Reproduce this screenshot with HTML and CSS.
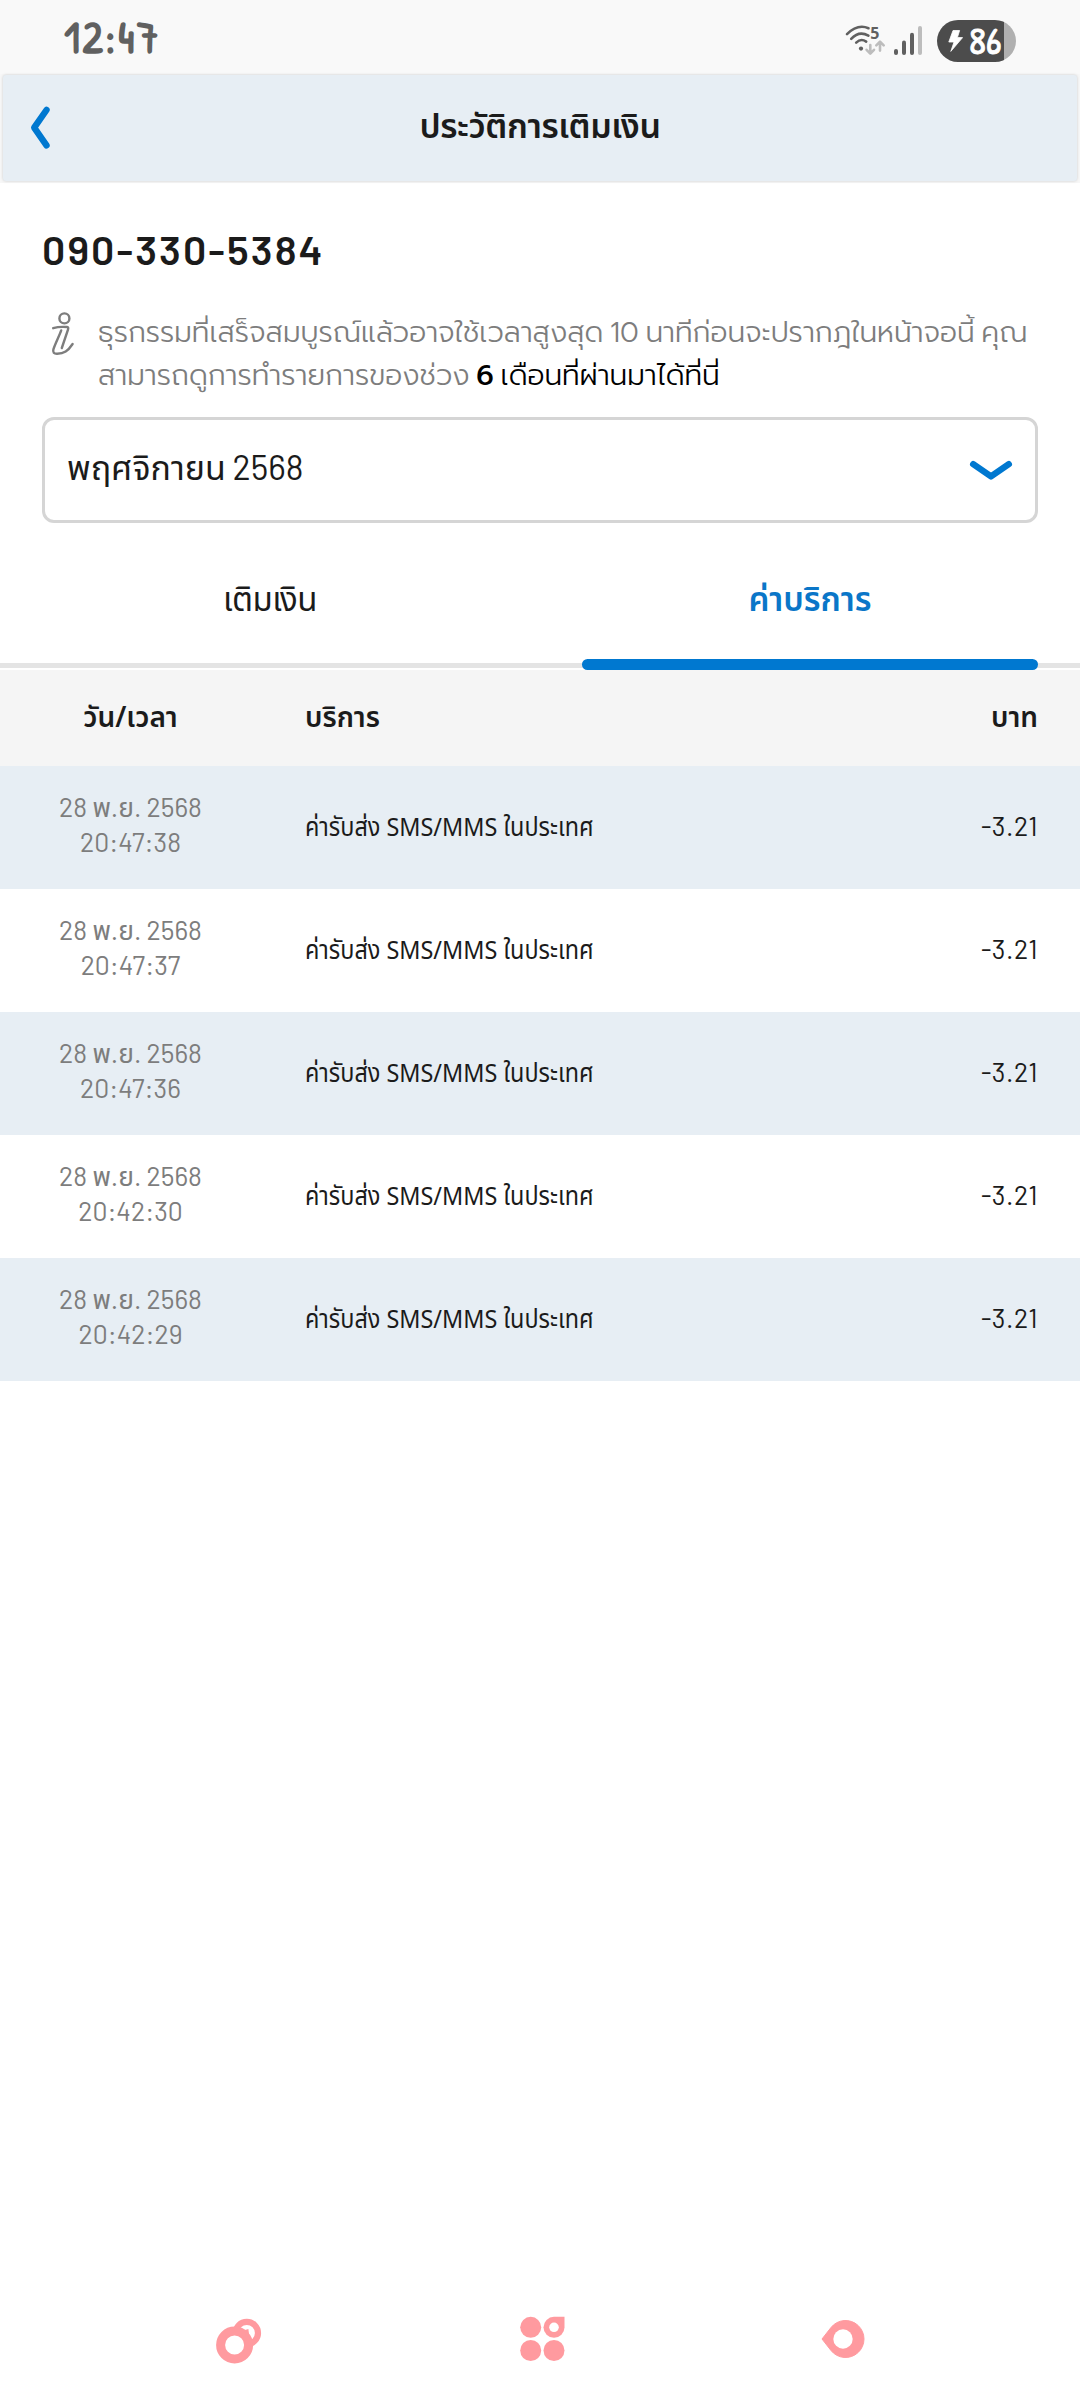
FILE: index.html
```html
<!DOCTYPE html>
<html lang="th">
<head>
<meta charset="utf-8">
<title>ประวัติการเติมเงิน</title>
<link rel="stylesheet" href="styles.css">
</head>
<body>
<div class="status">
  <span class="clock">12:47</span>
  <div class="indicators">
    <svg class="wifi" width="40" height="32" viewBox="0 0 40 32" fill="none" stroke-linecap="round">
      <g stroke="#606060" stroke-width="2.6">
        <path d="M2 9.2Q12.5 -1.4 23.5 3.2"/>
        <path d="M6.2 13.8Q14 5.4 23.4 10.6"/>
        <path d="M11.2 17.6Q16 13 21.2 16.6"/>
      </g>
      <circle cx="16" cy="23.6" r="2.1" fill="#606060"/>
      <text class="band" x="25.2" y="14.4">5</text>
      <g stroke="#bdbdbd" stroke-width="2.6" stroke-linejoin="round">
        <path d="M25.3 20v8M21.6 24.8l3.7 3.8 3.7-3.8"/>
        <path d="M35 25.6v-8M31.3 20.4l3.7-3.8 3.7 3.8"/>
      </g>
    </svg>
    <svg class="signal" width="28" height="30" viewBox="0 0 28 30">
      <rect x="0" y="23" width="4" height="6" rx="2" fill="#606060"/>
      <rect x="8" y="14.5" width="4" height="14.5" rx="2" fill="#606060"/>
      <rect x="16" y="6.8" width="4" height="22.2" rx="2" fill="#606060"/>
      <rect x="24" y="0" width="4" height="29" rx="2" fill="#bdbdbd"/>
    </svg>
    <div class="battery">
      <svg width="15" height="22" viewBox="0 0 15 22"><path d="M5 .5h6.6L9.4 7.6h5.2L2.8 21.4 6 12H.8z" fill="#fff" stroke="#fff" stroke-width=".8" stroke-linejoin="round"/></svg>
      <span class="level">86</span>
    </div>
  </div>
</div>

<header class="appbar">
  <svg class="back" width="24" height="46" viewBox="0 0 24 46"><path d="M18.500 5 6.200 22.700 18.500 40.400" fill="none" stroke="#0078d0" stroke-width="6.400" stroke-linecap="round" stroke-linejoin="round"/></svg>
  <h1 class="title">ประวัติการเติมเงิน</h1>
</header>

<main>
  <p class="phone">090-330-5384</p>
  <div class="info">
    <svg class="info-icon" width="24" height="44" viewBox="0 0 24 44" fill="none" stroke="#7d7d7d" stroke-width="2.4" stroke-linecap="round" stroke-linejoin="round">
      <circle cx="13.4" cy="6.4" r="5"/>
      <path d="M2.2 16.2C6 15 11 14.6 16 15c1.4.2 1.4 1.400 1 2.600L10.800 36M10.200 18.400C8.400 23.600 4 32 2.400 37.400c-.8 3 .6 4.300 3.400 4.300C13 41.800 17 39 21.600 32"/>
    </svg>
    <p class="info-text">ธุรกรรมที่เสร็จสมบูรณ์แล้วอาจใช้เวลาสูงสุด 10 นาทีก่อนจะปรากฎในหน้าจอนี้ คุณ<br>สามารถดูการทำรายการของช่วง <span class="dark"><b>6</b> เดือนที่ผ่านมาได้ที่นี่</span></p>
  </div>
  <div class="select">
    <span class="month">พฤศจิกายน 2568</span>
    <svg width="44" height="22" viewBox="0 0 44 22"><path d="M4.2 4.2 22 16.4 39.8 4.2" fill="none" stroke="#0078d0" stroke-width="6.4" stroke-linecap="round" stroke-linejoin="round"/></svg>
  </div>
  <nav class="tabs">
    <span class="tab">เติมเงิน</span>
    <span class="tab active">ค่าบริการ</span>
  </nav>
  <section class="table">
    <div class="row head"><span class="date">วัน/เวลา</span><span class="service">บริการ</span><span class="amount">บาท</span></div>
    <div class="row"><span class="date">28 พ.ย. 2568<br>20:47:38</span><span class="service">ค่ารับส่ง SMS/MMS ในประเทศ</span><span class="amount">-3.21</span></div>
    <div class="row"><span class="date">28 พ.ย. 2568<br>20:47:37</span><span class="service">ค่ารับส่ง SMS/MMS ในประเทศ</span><span class="amount">-3.21</span></div>
    <div class="row"><span class="date">28 พ.ย. 2568<br>20:47:36</span><span class="service">ค่ารับส่ง SMS/MMS ในประเทศ</span><span class="amount">-3.21</span></div>
    <div class="row"><span class="date">28 พ.ย. 2568<br>20:42:30</span><span class="service">ค่ารับส่ง SMS/MMS ในประเทศ</span><span class="amount">-3.21</span></div>
    <div class="row"><span class="date">28 พ.ย. 2568<br>20:42:29</span><span class="service">ค่ารับส่ง SMS/MMS ในประเทศ</span><span class="amount">-3.21</span></div>
  </section>
</main>

<footer class="navbar">
  <svg width="60" height="60" viewBox="0 0 60 60" fill="none" stroke="#ff9a9f">
    <circle cx="36.8" cy="24" r="11.2" stroke-width="6.2"/>
    <path d="M35 21l3.4-1 1.2 10-4 2z" fill="#ff9a9f" stroke="none"/>
    <circle cx="24.6" cy="36" r="14" stroke-width="9" fill="#fff"/>
  </svg>
  <svg width="60" height="60" viewBox="0 0 60 60" fill="#ff9a9f">
    <circle cx="18.7" cy="18.3" r="10.5"/>
    <path d="M42 7.800h10.500v10.500A10.500 10.500 0 1 1 42 7.800z"/>
    <circle cx="42" cy="18.3" r="4.800" fill="#fff"/>
    <circle cx="18.7" cy="41.5" r="10.500"/>
    <circle cx="42" cy="41.500" r="10.500"/>
  </svg>
  <svg width="60" height="60" viewBox="0 0 60 60">
    <path d="M9 30 18 18.500A18.500 18.500 0 1 1 18 41.500z" fill="#ff9a9f" stroke="#ff9a9f" stroke-linejoin="round"/>
    <circle cx="30" cy="30" r="9.700" fill="#fff"/>
  </svg>
</footer>
</body>
</html>
```

FILE: styles.css
```css
* { box-sizing: border-box; margin: 0; padding: 0; }
svg { display: block; flex: none; }

body {
  width: 1080px;
  height: 2400px;
  display: flex;
  flex-direction: column;
  background: #fff;
  color: #1b1b1b;
  font-family: Barlow, "Noto Sans Thai", "Noto Sans", sans-serif;
  overflow: hidden;
}

.status {
  height: 74px;
  padding: 0 64px;
  display: flex;
  align-items: center;
  justify-content: space-between;
  background: #f9f9f9;
}
.clock {
  font: 700 44px/78px "Patrick Hand", "Noto Sans", sans-serif;
  letter-spacing: 2.4px;
  color: #606060;
}
.indicators { display: flex; align-items: center; padding-top: 7px; }
.wifi { margin-right: 9px; overflow: visible; }
.band { font: 700 16px "Noto Sans", sans-serif; fill: #606060; }
.signal { margin-right: 15px; }
.battery {
  width: 79px;
  height: 42px;
  padding-left: 11px;
  display: flex;
  align-items: center;
  gap: 6px;
  border-radius: 21px;
  background: linear-gradient(90deg, #4c4c4c 67px, #b0b0b0 67px);
}
.level {
  margin-top: -2px;
  font: 400 39px/40px "Patrick Hand", "Noto Sans", sans-serif;
  color: #fff;
  -webkit-text-stroke: .8px #fff;
}

.appbar {
  height: 109px;
  padding: 1px 3px 2px;
  background: #f7f7f7;
  display: grid;
}
.appbar > * { grid-area: 1 / 1; }
.title {
  background: #e7eef4;
  border-radius: 3px;
  box-shadow: 0 0 3px rgba(0, 0, 0, .18);
  font-family: "Noto Sans Thai", "Noto Sans", sans-serif;
  font-size: 34px;
  font-weight: 600;
  line-height: 106px;
  letter-spacing: -.4px;
  text-align: center;
}
.back { z-index: 1; align-self: center; margin-left: 25px; }

.phone {
  padding: 36px 42px 0;
  font: 600 41px/60px Barlow, "Noto Sans", sans-serif;
  letter-spacing: 2.1px;
}
.info { display: flex; padding: 33px 0 0 51px; gap: 23px; }
.info-text {
  font: 300 28.3px/42.5px Prompt, "Noto Sans Thai", sans-serif;
  word-spacing: -4px;
  color: #7d7d7d;
  white-space: nowrap;
}
.dark { color: #000; }
.dark b { font-weight: 500; }

.select {
  margin: 20px 42px 0;
  height: 106px;
  padding: 0 22px 0 22px;
  display: flex;
  align-items: center;
  justify-content: space-between;
  border: 3px solid #d5d5d5;
  border-radius: 12px;
}
.select svg { margin-top: 2px; }
.month { margin-top: -2px; font-size: 34px; letter-spacing: 0; }

.tabs {
  height: 147px;
  padding: 0 42px;
  display: grid;
  grid-template-columns: 456px 456px;
  grid-template-rows: 147px;
  justify-content: space-between;
  background: linear-gradient(#e4e4e4, #e4e4e4) 0 140px / 100% 5px no-repeat;
}
.tab {
  font-family: "Noto Sans Thai", "Noto Sans", sans-serif;
  font-size: 33px;
  line-height: 156px;
  text-align: center;
  letter-spacing: -.5px;
}
.active {
  position: relative;
  color: #0a76c8;
  font-weight: 600;
  letter-spacing: 0;
}
.active::after {
  content: "";
  position: absolute;
  left: 0;
  right: 0;
  bottom: 0;
  height: 11px;
  border-radius: 5.5px;
  background: #0078d0;
}

.row {
  height: 123px;
  padding-right: 42px;
  display: grid;
  grid-template-columns: 261px 1fr auto;
  column-gap: 44px;
  align-items: center;
  font-size: 26.5px;
}
.row:nth-child(even) { background: #e7eef4; }
.head {
  height: 96px;
  background: #f5f5f5;
  font: 600 28px "Noto Sans Thai", "Noto Sans", sans-serif;
}
.date { text-align: center; }
.row:not(.head) .date { line-height: 35px; padding-bottom: 7px; color: #7d7d7d; }
.row:not(.head) .service {
  font: 400 26px "Noto Sans Thai", "Noto Sans", sans-serif;
  transform: scaleX(.9);
  transform-origin: left;
  white-space: nowrap;
}
.row:not(.head) .amount { padding-bottom: 5px; letter-spacing: .5px; }

.navbar {
  margin-top: auto;
  height: 123px;
  padding: 0 207px 0 210px;
  display: flex;
  align-items: center;
  justify-content: space-between;
}
```
